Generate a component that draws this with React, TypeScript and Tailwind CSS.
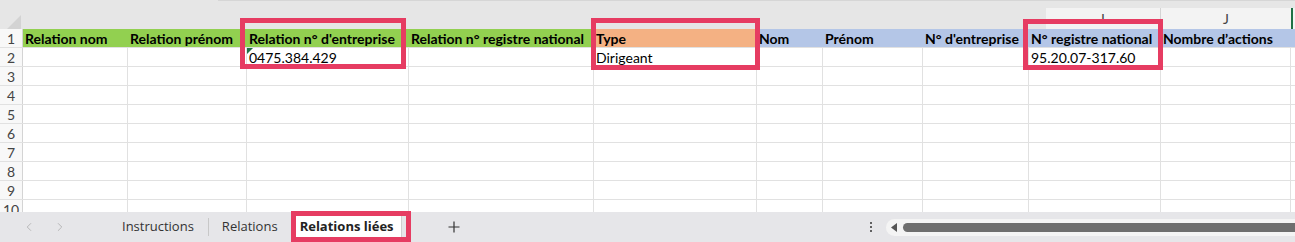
import { ChevronLeft, ChevronRight } from "lucide-react";

type Col = { w: string; head: string; fill: string; value?: string };

const columns: Col[] = [
  { w: "w-[105px]", head: "Relation nom", fill: "bg-[#92d050]" },
  { w: "w-[119px]", head: "Relation prénom", fill: "bg-[#92d050]" },
  { w: "w-[162px]", head: "Relation n° d'entreprise", fill: "bg-[#92d050]", value: "0475.384.429" },
  { w: "w-[185px]", head: "Relation n° registre national", fill: "bg-[#92d050]" },
  { w: "w-[163px]", head: "Type", fill: "bg-[#f4b183]", value: "Dirigeant" },
  { w: "w-[66px]", head: "Nom", fill: "bg-[#b4c6e7]" },
  { w: "w-[100px]", head: "Prénom", fill: "bg-[#b4c6e7]" },
  { w: "w-[106px]", head: "N° d'entreprise", fill: "bg-[#b4c6e7]" },
  { w: "w-[132px]", head: "N° registre national", fill: "bg-[#b4c6e7]", value: "95.20.07-317.60" },
  { w: "w-[130px]", head: "Nombre d’actions", fill: "bg-[#b4c6e7]" },
];

const rows = [2, 3, 4, 5, 6, 7, 8, 9, 10];

const RowNum = ({ n }: { n: number }) => (
  <div className="flex h-full w-[23px] shrink-0 items-center justify-center border-r border-[#d4d4d4] bg-[#f8f8f8] text-[14px] text-[#444]">
    {n}
  </div>
);

export default function App() {
  return (
    <div className="relative h-[242px] w-[1295px] overflow-hidden bg-white font-['Lato',sans-serif] text-black">
      {/* top strip + column letters */}
      <div className="flex h-[29px] flex-col bg-[#e6e6e6]">
        <div className="flex h-[2px]">
          <div className="w-[218px]" />
          <div className="flex-1 border-b border-[#d6d6d6] bg-white" />
        </div>
        <div className="mt-[7px] flex flex-1">
          <div className="flex w-[23px] items-end justify-end pb-[1px] pr-[2px]">
            <svg width="14" height="14" viewBox="0 0 14 14">
              <polygon points="14,0 14,14 0,14" fill="#d3d3d3" />
            </svg>
          </div>
          <div className="w-[1023px]" />
          <div className="flex w-[115px] items-center justify-center border-b border-r border-[#d4d4d4] bg-[#f3f3f3] text-[14px] text-[#444]">
            I
          </div>
          <div className="flex w-[130px] items-center justify-center border-b border-[#d4d4d4] bg-[#f3f3f3] text-[14px] text-[#444]">
            J
          </div>
          <div className="w-[2px] bg-[#1e7145]" />
          <div className="flex-1 border-b border-[#d4d4d4] bg-[#f3f3f3]" />
        </div>
      </div>

      {/* grid */}
      <div className="h-[183px] overflow-hidden">
        <div className="flex h-[19px] border-b border-[#e1e1e1]">
          <RowNum n={1} />
          {columns.map((c) => (
            <div
              key={c.head}
              className={`${c.w} ${c.fill} flex shrink-0 items-center overflow-hidden whitespace-nowrap pl-[2px] text-[14px] font-bold`}
            >
              {c.head}
            </div>
          ))}
          <div className="flex-1 bg-[#b4c6e7]" />
        </div>
        {rows.map((r) => (
          <div key={r} className="flex h-[19px] border-b border-[#e1e1e1]">
            <RowNum n={r} />
            {columns.map((c) => (
              <div
                key={c.head}
                className={`${c.w} relative flex shrink-0 items-center overflow-hidden whitespace-nowrap border-r border-[#e1e1e1] pl-[2px] text-[14px]`}
              >
                {r === 2 && c.value}
                {r === 2 && c.value === "0475.384.429" && (
                  <svg className="absolute left-0 top-0" width="6" height="6" viewBox="0 0 6 6">
                    <polygon points="0,0 6,0 0,6" fill="#1e7145" />
                  </svg>
                )}
              </div>
            ))}
            <div className="flex-1" />
          </div>
        ))}
      </div>

      {/* sheet tabs */}
      <div className="flex h-[30px] items-center bg-[#e6e6e9] font-['Open_Sans',sans-serif] text-[13px] text-[#333]">
        <div className="flex w-[110px] items-center gap-[17px] pl-[22px] text-[#a8a8a8]">
          <ChevronLeft size={14} strokeWidth={1.3} />
          <ChevronRight size={14} strokeWidth={1.3} />
        </div>
        <div className="ml-[12px] pb-[1px]">Instructions</div>
        <div className="ml-[14px] h-[18px] w-px bg-[#c8c8c8]" />
        <div className="ml-[13px] pb-[1px]">Relations</div>
        <div className="ml-[15px] flex h-full w-[109px] flex-col items-center justify-center border-r border-[#cfcfcf] bg-white">
          <span className="mt-[2px] font-bold text-[#222]">Relations liées</span>
          <span className="mt-[1px] h-[2px] w-[90px] bg-[#1e7145]" />
        </div>
        <div className="ml-[46px] flex items-center">
          <svg width="12" height="12" viewBox="0 0 12 12">
            <path d="M6 0.5v11M0.5 6h11" stroke="#333" strokeWidth="1.2" />
          </svg>
        </div>
        <div className="ml-[410px] flex flex-col gap-[2px]">
          <span className="h-[2px] w-[2px] rounded-full bg-[#333]" />
          <span className="h-[2px] w-[2px] rounded-full bg-[#333]" />
          <span className="h-[2px] w-[2px] rounded-full bg-[#333]" />
        </div>
        <div className="ml-[14px] flex h-[17px] flex-1 items-center rounded-l-full bg-[#f4f4f4] pl-[5px]">
          <svg width="6" height="9" viewBox="0 0 6 9">
            <polygon points="6,0 6,9 0,4.5" fill="#555" />
          </svg>
          <div className="ml-[6px] h-[9px] flex-1 rounded-l-full bg-[#6e6e6e]" />
        </div>
      </div>

      {/* annotation boxes */}
      <div className="absolute left-[240px] top-[18px] h-[51px] w-[166px] border-[5px] border-[#e63c62]" />
      <div className="absolute left-[591px] top-[18px] h-[52px] w-[169px] border-[5px] border-[#e63c62]" />
      <div className="absolute left-[1023px] top-[19px] h-[51px] w-[140px] border-[5px] border-[#e63c62]" />
      <div className="absolute left-[291px] top-[211px] h-[31px] w-[120px] border-[5px] border-[#e63c62]" />
    </div>
  );
}
